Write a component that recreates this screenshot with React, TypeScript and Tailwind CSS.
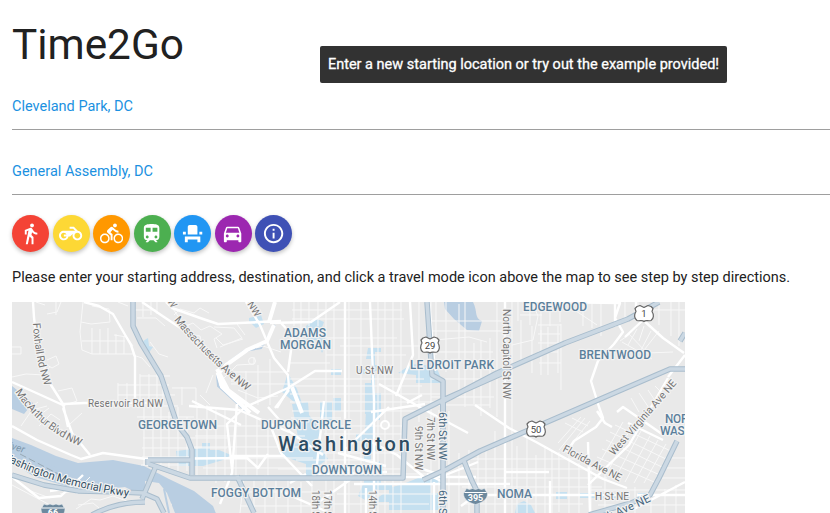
import React from "react";

const modes = [
  { name: "Walk", color: "bg-[#f44336]", d: "M13.5 5.5c1.1 0 2-.9 2-2s-.9-2-2-2-2 .9-2 2 .9 2 2 2zM9.8 8.9L7 23h2.1l1.8-8 2.1 2v6h2v-7.5l-2.1-2 .6-3C14.8 12 16.8 13 19 13v-2c-1.9 0-3.5-1-4.3-2.4l-1-1.6c-.4-.6-1-1-1.7-1-.3 0-.5.1-.8.1L6 8.3V13h2V9.6l1.8-.7" },
  { name: "Motorcycle", color: "bg-[#fdd835]", d: "M19.44 9.03L15.41 5H11v2h3.59l2 2H5c-2.8 0-5 2.2-5 5s2.2 5 5 5c2.46 0 4.45-1.69 4.9-4h1.65l2.77-2.77c-.21.54-.32 1.14-.32 1.77 0 2.8 2.2 5 5 5s5-2.2 5-5c0-2.65-1.97-4.77-4.56-4.97zM7.82 15C7.4 16.15 6.28 17 5 17c-1.63 0-3-1.37-3-3s1.37-3 3-3c1.28 0 2.4.85 2.82 2H5v2h2.82zM19 17c-1.66 0-3-1.34-3-3s1.34-3 3-3 3 1.34 3 3-1.34 3-3 3z" },
  { name: "Bike", color: "bg-[#ff9800]", d: "M15.5 5.5c1.1 0 2-.9 2-2s-.9-2-2-2-2 .9-2 2 .9 2 2 2zM5 12c-2.8 0-5 2.2-5 5s2.2 5 5 5 5-2.2 5-5-2.2-5-5-5zm0 8.5c-1.9 0-3.5-1.6-3.5-3.5s1.6-3.5 3.5-3.5 3.5 1.6 3.5 3.5-1.6 3.5-3.5 3.5zm5.8-10l2.4-2.4.8.8c1.3 1.3 3 2.1 5.1 2.1V9c-1.5 0-2.7-.6-3.6-1.5l-1.9-1.9c-.5-.4-1-.6-1.6-.6s-1.1.2-1.4.6L7.8 8.4c-.4.4-.6.9-.6 1.4 0 .6.2 1.1.6 1.4L11 14v5h2v-6.2l-2.2-2.3zM19 12c-2.8 0-5 2.2-5 5s2.2 5 5 5 5-2.2 5-5-2.2-5-5-5zm0 8.5c-1.9 0-3.5-1.6-3.5-3.5s1.6-3.5 3.5-3.5 3.5 1.6 3.5 3.5-1.6 3.5-3.5 3.5z" },
  { name: "Train", color: "bg-[#4caf50]", d: "M12 2c-4 0-8 .5-8 4v9.5C4 17.43 5.57 19 7.5 19L6 20.5v.5h2.23l2-2H14l2 2h2v-.5L16.5 19c1.93 0 3.5-1.57 3.5-3.5V6c0-3.5-3.58-4-8-4zM7.5 17c-.83 0-1.5-.67-1.5-1.5S6.67 14 7.5 14s1.5.67 1.5 1.5S8.33 17 7.5 17zm3.5-7H6V6h5v4zm2 0V6h5v4h-5zm3.5 7c-.83 0-1.5-.67-1.5-1.5s.67-1.5 1.5-1.5 1.5.67 1.5 1.5-.67 1.5-1.5 1.5z" },
  { name: "Seat", color: "bg-[#2196f3]", d: "M4 18v3h3v-3h10v3h3v-6H4zm15-8h3v3h-3zM2 10h3v3H2zm15 3H7V5c0-1.1.9-2 2-2h6c1.1 0 2 .9 2 2v8z" },
  { name: "Car", color: "bg-[#9c27b0]", d: "M18.92 6.01C18.72 5.42 18.16 5 17.5 5h-11c-.66 0-1.21.42-1.42 1.01L3 12v8c0 .55.45 1 1 1h1c.55 0 1-.45 1-1v-1h12v1c0 .55.45 1 1 1h1c.55 0 1-.45 1-1v-8l-2.08-5.99zM6.5 16c-.83 0-1.5-.67-1.5-1.5S5.67 13 6.5 13s1.5.67 1.5 1.5S7.33 16 6.5 16zm11 0c-.83 0-1.5-.67-1.5-1.5s.67-1.5 1.5-1.5 1.5.67 1.5 1.5-.67 1.5-1.5 1.5zM5 11l1.5-4.5h11L19 11H5z" },
  { name: "Info", color: "bg-[#3f51b5]", d: "M11 17h2v-6h-2v6zm1-15C6.48 2 2 6.48 2 12s4.48 10 10 10 10-4.48 10-10S17.52 2 12 2zm0 18c-4.41 0-8-3.59-8-8s3.59-8 8-8 8 3.59 8 8-3.59 8-8 8zM11 9h2V7h-2v2z" },
];

// Neighbourhood streets
const minor = [
  "M56 302v13M36 302l9 3M47 314l10-2 4-10M12 347h9v7H12M12 377l14-3 19 1 5-9M47 360l9-4 3 8-7 4-5-3M38 402l-9 7 11 6 9-7M58 391l14-3 5 13-12 4M21 426l11-16 15-4M39 426l12-12 9 6M70 424l12-11M83 302l-3 30 2 18 10 4h41M81 322l10 2 19-2M92 328v26M100 329v25M108 328v26M116 334v20M124 336v18M82 341h43M114 335l13 2 6 9M110 322l-1-13-17-3",
  "M134 303v16M143 302v15M151 302v13M157 302v12M137 318h19l9 8M134 310h22M133 355l9 3 8 9M118 385h51M118 395h57M118 406h60M118 383v23M127 383v23M140 374v32M149 374v32M157 374v32M140 376h30M163 385v20M150 342l9 12 9 3",
  "M118 302l10 4M168 302l10 14M174 315l6-6 14 4 6-5 9 5M176 318l10 8 7-3 8 7 9-4 12 8-8 5 3 9M188 324v10l12 2 3 14M214 327l20 1 8 10-22 9M216 338l7 7 20-6M237 324l8 11M256 348l7-2 18 6M219 383l18-18 17-1v-7M232 382v-10h56M231 384h63M246 371v34M258 365v40M270 359v46M238 390l20 8 20-2M172 388h24v18M182 387v18M200 395l10 10M213 375l-7 18",
  "M294 302v24M301 302v40M309 302v24M318 302v24M326 302v211M334 302v211M349 302v211M361 302v211M378 302v211M385 302v211M393 302v211M401 302v211M419 302v120M436 302v53M446 302v70M459 304v87M465 302v105M474 343v61M481 340v76M490 338v70M497 302v115M512 302v211M521 320v44M532 326v47M541 330v45M548 327v48M558 326v47",
  "M292 310h110M292 319h112M327 338h70M340 346h80M326 355h80M290 363h40M290 379h134M288 386h134M290 394h150M290 402h150M292 411h137M291 418h50M324 426h78M324 434h78M320 453h80M296 460h77M278 469h125M337 494h100M326 504h103M372 474h58M432 379h48M431 397h63M430 405h60M431 321h71M432 331h73M434 340l35-3 18 5M436 352h57",
  "M137 417h57M145 429h51M143 438h84M142 448h85M142 457h47M141 465h47M144 408v58M153 406v61M161 405v62M169 412v58M178 407v64M187 417v54M197 407v69M207 405v70M216 407v76M225 408v74M236 405v75M246 405v76M257 419v60M268 423v54M196 426h100M195 436h110M194 447h114M194 458h119M203 468h110",
  "M431 302v211M439 410v103M449 411v102M459 453v60M469 450v63M478 450v63M486 448v65M495 431v82M517 446v67M527 438v75M536 455v58M545 446v67M552 450v63M559 452v60M569 456v57M579 463v50M591 467v46M605 474v39M635 487v26M651 492v21M458 459h126M461 469h135M465 478h142M462 487h140M465 504h118M591 490h94M598 505h87M665 458h20M665 468h20M660 478h25",
  "M518 302v19M530 302v23M541 303v38M550 302v24M560 302v20M512 345l21-5 5-24-6-14M520 315h22M538 325h23M538 334h22M538 343h22M538 352h20M539 363h22M561 324v66M570 307l27 18M583 302v24M592 302v26M601 302v34M625 302v21M638 302v12M659 302v23M671 302v34M679 302v44M650 310h35M628 333l19 20 26-1M622 342l30 17M630 334l-10 7M637 329l-9 16M644 326l-5 15M651 331l-10 19M659 331l-18 23M631 398l8 14M639 393l10 15M648 390l8 12M655 386l7 7",
  "M581 417l-23 26M585 418l-26 32M590 421l-26 32M565 423l18 9M572 418l16 8M615 425l58 27M610 432l58 28M606 440l58 28M602 449l58 26M597 457l57 25M623 422l-26 45M632 426l-24 45M641 431l-24 44M650 436l-25 46M658 440l-24 43M666 444l-22 39M665 489v24M676 485v28",
  "M78 505l15-2 6 5M76 509l15-10 9 1 13-4 14 5M60 494l17-4 13-13M12 485l38 20M28 490l22 8M244 475l-4 38M254 476v37M265 475v38M276 477v36M288 480v33M301 482v31M312 477v36M242 492h85M240 506h85",
];

const major = [
  "M33 302c1 22 3 37 7 53l11 30 12 19 5 23M12 382l31 14 22 10M64 404l20-1h67M84 302l15 4 14 8 18 31 4 12v46M142 302l19 13 21 14M63 408l9 25 18 22M246 302l14 23 14 33 14 17 1 13-12 20M166 302l6 6 31 11 15 5 63-3M340 302l-29 20-41 1M345 302v211M370 302l4 98v113M410 302l3 53-17 41M429 302l6 69",
  "M281 323l12 13-5 36M243 408l45-20 27-17h27M289 390l-14 18M268 407l22 25 33 23M289 432l-50-22-50-4M324 401l-8 72M389 407l-43 42M379 384l46 26 43 23M365 439l32 16 27 22M414 466l29 10 35-14M427 474l16 8M338 453l48 13M344 464l10 13-34 24M317 474l70-2M343 477h133M290 483l16-9M354 484h156M366 488v25M434 482v31M371 412l54-8M407 403l15-8M241 425l-49-24",
  "M505 302v211M475 405l34 23 27 14 67 37 24 9M549 302l71 1-5 15 8 14-9 12-16 17-7 20 8 26 4 11-7 9-22 14-7 11M615 302v25M636 302v18M642 319l21 19 21 15M668 377l17-22M668 378l-39 67-41 40M642 321l-17 16M617 412l6-5 39 27M597 411l8 12 7 4M628 423l35 17M588 442l2 71M637 495h48M632 510l53-28M466 495h164M476 495l-15 11M506 472h43M550 481v32",
  "M12 426l25 14 34 15 10 4 22-6 43 6 101-1 11 10 10-14M237 404l-5 69-12 31M247 405l-20 19 5 45M271 427l10 26 31 33M278 490l52 23M12 477l27 21 22-2 22-21M50 491l20-3 8 5M230 456h55",
];

const highways = [
  "M133 302v24l8 17 20 33 7 21 9 27 10 13 5 13v25",
  "M427 302l5 73 11 6v33M510 370l-65 29-40 20-2 59H190l-41-14M685 369h-15l-65 28-125 54-33 18-24 11M685 333l-5 8M659 302l-31 17-63 24-68 30-57 30",
  "M443 402v111M464 461l8 20 5 10v22M677 441l-18 37-9 17-19 8-42 12M156 466l-14 33M148 460h44M148 459v6M12 475l32 10 35 6 42 1 22 1 14 6 7 14M92 515c18-10 34-13 53-13M237 476l17 37",
];

const labels: [string, number, number, number, number, string, number?][] = [
  ["ADAMS", 284, 337, 12, 42, "#5b7f9b"], ["MORGAN", 280, 349, 12, 51, "#5b7f9b"],
  ["EDGEWOOD", 523, 311, 12, 64, "#5b7f9b"], ["BRENTWOOD", 579, 359, 12, 72, "#5b7f9b"],
  ["LE DROIT PARK", 410, 369, 12, 84, "#5b7f9b"], ["GEORGETOWN", 138, 429, 12, 79, "#5b7f9b"],
  ["DUPONT CIRCLE", 261, 429, 12, 90, "#5b7f9b"], ["DOWNTOWN", 312, 474, 12, 70, "#5b7f9b"],
  ["FOGGY BOTTOM", 211, 497, 12, 90, "#5b7f9b"], ["NOMA", 497, 498, 12, 35, "#5b7f9b"],
  ["NORTH", 665, 423, 12, 38, "#5b7f9b"], ["WASHINGTON", 660, 435, 12, 75, "#5b7f9b"],
  ["U St NW", 356, 374, 10, 37, "#757575"], ["H St NE", 595, 500, 10, 34, "#757575"],
  ["Reservoir Rd NW", 88, 407, 10, 75, "#757575"],
  ["NW", 247, 304, 10, 16, "#757575", 58],
  ["W", 167, 301, 10, 10, "#757575", 58],
  ["North Capitol St NW", 502.5, 309, 10.5, 90, "#757575", 90],
  ["6th St NW", 439, 412, 11, 48, "#45657d", 90], ["6th St NW", 439, 490, 11, 48, "#45657d", 90],
  ["7th St NW", 427, 417, 10, 43, "#757575", 90], ["9th St NW", 415, 426, 10, 44, "#757575", 90],
  ["18th St NW", 312, 490, 10, 48, "#757575", 90], ["17th St NW", 324, 490, 10, 48, "#757575", 90],
  ["14th St NW", 369, 490, 10, 48, "#757575", 90],
  ["Florida Ave NE", 562, 451, 10.5, 65, "#757575", 28],
  ["West Virginia Ave NE", 614, 456, 10.5, 96, "#757575", -49],
];

const arcs = [
  { id: "foxhall", d: "M33 323Q35 359 45 387", text: "Foxhall Rd NW", size: 10.5, length: 64, color: "#757575" },
  { id: "mass", d: "M174 320Q204 357 249 393", text: "Massachusetts Ave NW", size: 10.8, length: 102, color: "#757575" },
  { id: "macarthur", d: "M15 392Q40 430 82 447", text: "MacArthur Blvd NW", size: 10.8, length: 86, color: "#757575" },
  { id: "memorial", d: "M1 458Q52 486 132 497", text: "Washington Memorial Pkwy", size: 11.2, length: 134, color: "#314e63" },
  { id: "newyork", d: "M568 535Q615 519 653 500", text: "New York Ave NE", size: 11.2, length: 90, color: "#45657d" },
];

function Shield({ x, y, label }: { x: number; y: number; label: string }) {
  return (
    <g transform={`translate(${x} ${y})`}>
      <path d="M-7-7L-4-8 0-6 4-8 7-7 9-5 8-2C10 1 10 5 7 7 4 8 2 6 0 8-2 6-4 8-7 7-10 5-10 1-8-2L-9-5z" fill="white" stroke="#666" strokeWidth="1.2" strokeLinejoin="round" />
      <text y="3.8" textAnchor="middle" fontSize="9.5" fill="#444">{label}</text>
    </g>
  );
}

function Interstate({ x, y, label }: { x: number; y: number; label: string }) {
  return (
    <g transform={`translate(${x} ${y})`}>
      <path d="M-9-8L-6-7-3-8 0-7 3-8 6-7 9-8 12-3C12 3 7 6 0 8-7 6-12 3-12-3z" fill="#6d899e" stroke="#e9eef2" strokeWidth=".6" />
      <path d="M-11-4h22" stroke="white" strokeWidth="1" />
      <text y="4" textAnchor="middle" fontSize="9" fontWeight="700" fill="white">{label}</text>
    </g>
  );
}

function CityMap() {
  return (
    <svg viewBox="12 302 673 211" className="mt-[13px] block h-[211px] w-[673px] shrink-0 bg-[#e9e9e9] font-[Roboto,sans-serif]" aria-label="Map of Washington">
      <g fill="#c5e0f0">
        <path d="M143 341l5-3 1 8 4 1-5 7zM176 451l26-3v-5h8v7h9l12 5-8 5-20 6h-25zM249 318l12-3 3 9-8 4-7-7zM306 326l9-8 9 4-3 8 7 11-6 12-6-13-9 1zM289 375l8 14 7 20-10-7-12-10 5-16zM331 369h10v6h-10zM333 398h8v13h-8zM368 348h13v4h-6v13h8v6h-8v22h6v21h-16v-31h6v-9h-12v-5h12v-10h-5zM412 364l24 2 7 17h-27v-8l-18-2zM292 404l16-2 1 13 12 15-4 11 11 18-10 7v12h-12v-14l-15-5-12-6 8-8 12-2zM320 402h12v21h-12zM366 407h14v13h-7v17h8v14h-10v11h-7v-21h-8v-7h9zM363 471l17-10 1 22 11 1v6h-18l-7 11-9-5 6-14zM389 488l14-4 15-6h13v-4h11v9h-11v10h15v17H389v-8h-17l11-8h6zM517 504l7-3 7 4 4 8h-20zM556 492h11v7h-11zM580 493h49v5h-49zM638 493h8v5h-8z" />
      </g>
      <g fill="#b9cee2">
        <path d="M12 386l21 17-9 11-12-5zM12 438l19 7 25 11 22 7 35-3 31 6 25 13 25 12 19 15 4 10H172v-12l-15-8h-14l-18-9-30 3-29-4-31-9-23-14zM444 302h29c5 10 1 16 9 19l-3 10-12-1-13-11-9-10z" />
      </g>
      <path d="M145 481l14 2 8 10 8 20h-63l20-14h14z" fill="#e9e9e9" />
      <path d="M275 325l-14 23-17 3-22 16-5 8 1 11 30 27M12 452l31 9 28 17M164 489l5 24" fill="none" stroke="#b9cee2" strokeWidth="2" />
      <g fill="none" stroke="#f8f8f8" strokeWidth="1" strokeLinejoin="round">{minor.map((d) => <path key={d} d={d} />)}</g>
      <g fill="none" stroke="white" strokeWidth="2.4" strokeLinejoin="round">{major.map((d) => <path key={d} d={d} />)}</g>
      <path d="M274 325l-7 16-20 9-21 15-8 9 4 13 28 26M275 302l-6 20M217 369l11 21 31 23M292 387l10 26" fill="none" stroke="white" strokeWidth="4" />
      <circle cx="385" cy="425" r="4" fill="#eee" stroke="white" strokeWidth="2" />
      <circle cx="252" cy="361" r="3.5" fill="none" stroke="#f8f8f8" />
      <path d="M20 454l46 24" fill="none" stroke="#98a9b5" strokeDasharray="7 3" />
      <g fill="none" strokeLinejoin="round">
        <g stroke="#a9bdcd" strokeWidth="5.5">{highways.map((d) => <path key={d} d={d} />)}</g>
        <g stroke="#cbd8e3" strokeWidth="3.5">{highways.map((d) => <path key={d} d={d} />)}</g>
      </g>
      <Shield x={430} y={345} label="29" />
      <Shield x={644} y={313.5} label="1" />
      <Shield x={536} y={429} label="50" />
      <Interstate x={475.5} y={496.5} label="395" />
      <Interstate x={53} y={512} label="66" />
      <g stroke="#f2f2f2" strokeWidth="2.5" strokeLinejoin="round" paintOrder="stroke">
        {labels.map(([text, x, y, size, length, fill, angle], i) => (
          <text key={i} transform={`translate(${x} ${y}) rotate(${angle || 0})`} fontSize={size} textLength={length} fill={fill} fontWeight={size === 12 ? 500 : 400}>{text}</text>
        ))}
        {arcs.map((arc) => (
          <g key={arc.id}>
            <path id={arc.id} d={arc.d} fill="none" stroke="none" />
            <text fontSize={arc.size} fill={arc.color}><textPath href={`#${arc.id}`} textLength={arc.length}>{arc.text}</textPath></text>
          </g>
        ))}
        <text x="3" y="447" fontSize="10" fill="#7b95aa" stroke="none" fontStyle="italic" transform="rotate(16 3 447)">River</text>
        <text x="278" y="451" fontSize="20" textLength="132" fill="#2d4c63" fontWeight="500">Washington</text>
      </g>
    </svg>
  );
}

export default function App() {
  return (
    <main className="relative flex h-[513px] w-full flex-col overflow-hidden bg-white pl-3 font-[Roboto,sans-serif] text-[14.5px] text-[#212121]">
      <h1 className="mt-[22px] h-[46px] text-[42.34px] leading-[46px]">Time2Go</h1>
      <div className="mt-[17px] flex h-[45px] items-center border-b border-[#9e9e9e] pb-px text-[#1b91e1]">Cleveland Park, DC</div>
      <div className="mt-5 flex h-[45px] items-center border-b border-[#9e9e9e] pb-px text-[#1b91e1]">General Assembly, DC</div>
      <nav className="mt-5 flex gap-[3.5px]" aria-label="Travel modes">
        {modes.map((mode) => (
          <button key={mode.name} aria-label={mode.name} className={`flex size-[37px] items-center justify-center rounded-full shadow-[0_2px_4px_rgba(0,0,0,0.25)] ${mode.color}`}>
            <svg viewBox="0 0 24 24" className="size-[23.2px] fill-white"><path d={mode.d} /></svg>
          </button>
        ))}
      </nav>
      <p className="mt-[15px] h-[22px] whitespace-nowrap leading-[22px] tracking-[-0.008px]">Please enter your starting address, destination, and click a travel mode icon above the map to see step by step directions.</p>
      <CityMap />
      <div role="tooltip" className="absolute left-80 top-[46px] flex h-[37px] w-[407px] items-center justify-center whitespace-nowrap rounded-[2px] bg-[#323232] text-white [-webkit-text-stroke:0.3px_white]">Enter a new starting location or try out the example provided!</div>
    </main>
  );
}
